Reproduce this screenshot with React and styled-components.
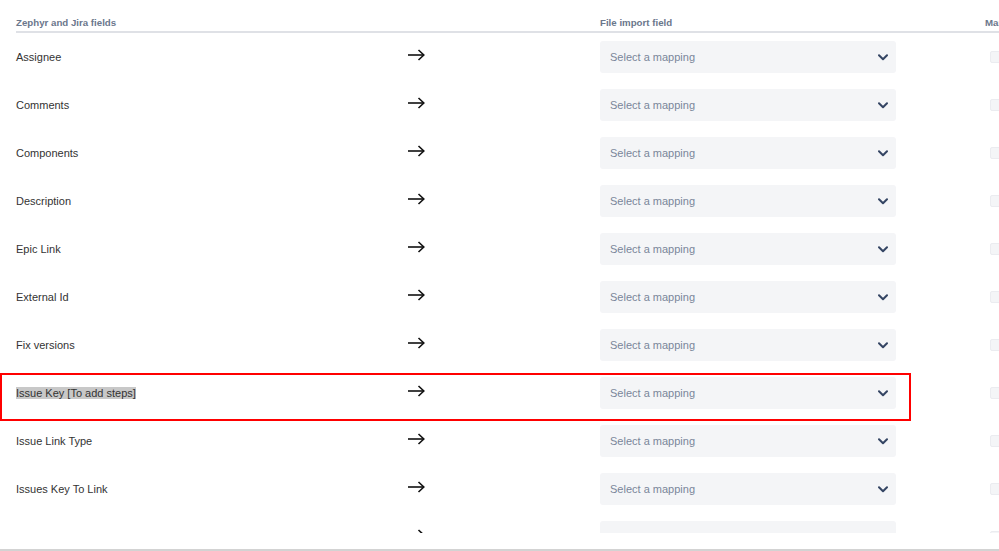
import styled, { createGlobalStyle } from "styled-components";

const fields = [
  "Assignee",
  "Comments",
  "Components",
  "Description",
  "Epic Link",
  "External Id",
  "Fix versions",
  "Issue Key [To add steps]",
  "Issue Link Type",
  "Issues Key To Link",
  "Labels",
];

function Arrow() {
  return (
    <ArrowSvg width="18" height="12" viewBox="0 0 18 12">
      <path d="M1 6 H16.5" stroke="#111" strokeWidth="1.6" fill="none" />
      <path
        d="M11.5 1 L16.8 6 L11.5 11"
        stroke="#111"
        strokeWidth="1.6"
        fill="none"
      />
    </ArrowSvg>
  );
}

function Chevron() {
  return (
    <svg width="10" height="7" viewBox="0 0 10 7">
      <path
        d="M1 1.2 L5 5.2 L9 1.2"
        stroke="#344563"
        strokeWidth="2"
        fill="none"
        strokeLinecap="round"
        strokeLinejoin="round"
      />
    </svg>
  );
}

function App() {
  return (
    <>
      <GlobalStyle />
      <Page>
        <Scroll>
          <Table>
            <HeadRow>
              <HeadCell>Zephyr and Jira fields</HeadCell>
              <HeadCell />
              <HeadCell>File import field</HeadCell>
              <HeadCell>Mandatory</HeadCell>
            </HeadRow>
            {fields.map((name) => {
              const marked = name.startsWith("Issue Key");
              return (
                <Row key={name}>
                  {marked && <Highlight />}
                  <FieldName>
                    {marked ? <Selected>{name}</Selected> : name}
                  </FieldName>
                  <ArrowCell>
                    <Arrow />
                  </ArrowCell>
                  <SelectCell>
                    <SelectBox>
                      <Placeholder>Select a mapping</Placeholder>
                      <Chevron />
                    </SelectBox>
                  </SelectCell>
                  <CheckCell>
                    <Check />
                  </CheckCell>
                </Row>
              );
            })}
          </Table>
        </Scroll>
      </Page>
    </>
  );
}

export default App;

const GlobalStyle = createGlobalStyle`
  body {
    margin: 0;
    background: #fff;
    font-family: "Liberation Sans", Arial, sans-serif;
    overflow: hidden;
  }
`;

const Page = styled.div`
  height: 549px;
  border-bottom: 2px solid #d3d3d3;
  overflow: hidden;
`;

const Scroll = styled.div`
  height: 533px;
  overflow: hidden;
  padding-left: 16px;
`;

const Table = styled.div`
  width: 1100px;
`;

const columns = "391px 193px 385px 1fr";

const HeadRow = styled.div`
  display: grid;
  grid-template-columns: ${columns};
  height: 31px;
  align-items: end;
  border-bottom: 2px solid #dfe1e6;
`;

const HeadCell = styled.div`
  font-size: 9.7px;
  font-weight: bold;
  color: #6b778c;
  padding-bottom: 3px;
  white-space: nowrap;
`;

const Row = styled.div`
  position: relative;
  display: grid;
  grid-template-columns: ${columns};
  height: 48px;
  align-items: center;
`;

const Highlight = styled.div`
  position: absolute;
  left: -16px;
  top: 4px;
  width: 907px;
  height: 44px;
  border: 2px solid #ff0000;
  pointer-events: none;
`;

const FieldName = styled.div`
  font-size: 11px;
  color: #333;
`;

const Selected = styled.span`
  background: #c8c8c8;
  color: #333;
`;

const ArrowCell = styled.div`
  display: flex;
  align-items: center;
`;

const ArrowSvg = styled.svg`
  display: block;
  margin-top: -5px;
`;

const SelectCell = styled.div`
  display: flex;
`;

const SelectBox = styled.div`
  width: 296px;
  height: 32px;
  box-sizing: border-box;
  background: #f4f5f7;
  border-radius: 3px;
  display: flex;
  align-items: center;
  justify-content: space-between;
  padding: 0 8px 0 10px;
`;

const Placeholder = styled.span`
  font-size: 11px;
  color: #7a869a;
`;

const CheckCell = styled.div`
  padding-left: 5px;
  display: flex;
`;

const Check = styled.div`
  width: 10px;
  height: 10px;
  background: #f4f5f7;
  border: 1px solid #ebecf0;
  border-radius: 2px;
`;
